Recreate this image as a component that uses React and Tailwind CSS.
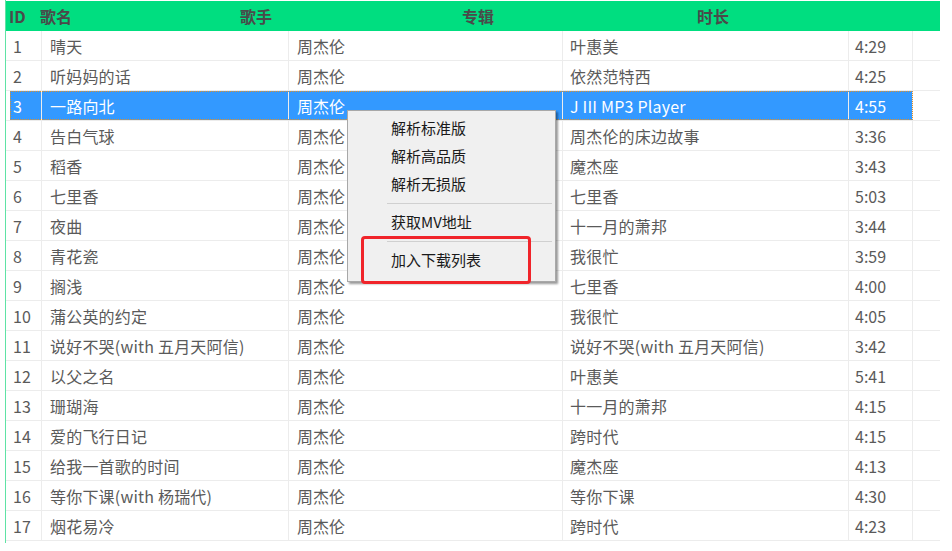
import React from "react";

const rows = [
  ["1", "晴天", "周杰伦", "叶惠美", "4:29"],
  ["2", "听妈妈的话", "周杰伦", "依然范特西", "4:25"],
  ["3", "一路向北", "周杰伦", "J III MP3 Player", "4:55"],
  ["4", "告白气球", "周杰伦", "周杰伦的床边故事", "3:36"],
  ["5", "稻香", "周杰伦", "魔杰座", "3:43"],
  ["6", "七里香", "周杰伦", "七里香", "5:03"],
  ["7", "夜曲", "周杰伦", "十一月的萧邦", "3:44"],
  ["8", "青花瓷", "周杰伦", "我很忙", "3:59"],
  ["9", "搁浅", "周杰伦", "七里香", "4:00"],
  ["10", "蒲公英的约定", "周杰伦", "我很忙", "4:05"],
  ["11", "说好不哭(with 五月天阿信)", "周杰伦", "说好不哭(with 五月天阿信)", "3:42"],
  ["12", "以父之名", "周杰伦", "叶惠美", "5:41"],
  ["13", "珊瑚海", "周杰伦", "十一月的萧邦", "4:15"],
  ["14", "爱的飞行日记", "周杰伦", "跨时代", "4:15"],
  ["15", "给我一首歌的时间", "周杰伦", "魔杰座", "4:13"],
  ["16", "等你下课(with 杨瑞代)", "周杰伦", "等你下课", "4:30"],
  ["17", "烟花易冷", "周杰伦", "跨时代", "4:23"],
];

const font = { fontFamily: '"Noto Sans CJK SC", "Microsoft YaHei", sans-serif' };

function Row({ r, selected }) {
  const txt = selected ? "text-white" : "text-[#5a5a5a]";
  const cell = "h-full flex items-center pt-[1px] border-r border-[#ececec] whitespace-nowrap overflow-hidden";
  return (
    <div className="flex h-[30px] border-b border-[#ececec]">
      <div className="w-[4px]" />
      <div
        className={
          "flex w-[903px] h-full " +
          (selected
            ? "bg-[#3399ff] outline-1 outline-dotted outline-[#e0902a] -outline-offset-1"
            : "")
        }
      >
        <div className={cell + " w-[32px] pl-[3px] " + txt}>{r[0]}</div>
        <div className={cell + " w-[247px] pl-[8px] tracking-[0.2px] " + txt}>{r[1]}</div>
        <div className={cell + " w-[274px] pl-[8px] " + txt}>{r[2]}</div>
        <div className={cell + " w-[286px] pl-[7px] tracking-[0.2px] " + txt}>{r[3]}</div>
        <div className={cell + " w-[64px] pl-[6px] " + txt}>{r[4]}</div>
      </div>
      <div className="flex-1 h-full" />
    </div>
  );
}

export default function App() {
  return (
    <div className="w-[952px] h-[551px] bg-white relative overflow-hidden text-[16px]" style={font}>
      <div className="pl-[5px]">
        <div className="w-[935px] h-[543px] border-l-[1.5px] border-[#5fe3a5] pt-[1px]">
          <div className="h-[30px] bg-[#00de80] flex items-center text-[#4a4a4a] font-semibold whitespace-nowrap">
            <div className="w-[34px] pl-[3px]">ID</div>
            <div className="w-[200px]">歌名</div>
            <div className="w-[222px]">歌手</div>
            <div className="w-[235px]">专辑</div>
            <div className="flex-1">时长</div>
          </div>
          {rows.map((r, i) => (
            <Row key={i} r={r} selected={i === 2} />
          ))}
        </div>
      </div>

      <div className="absolute left-[347px] top-[110px] w-[209px] h-[172px] bg-[#f0f0f0] border border-[#a8a8a8] shadow-[2px_2px_2px_rgba(0,0,0,0.4)] text-[15px] text-[#1a1a1a] pt-[3px]">
        <div className="h-[28px] flex items-center pl-[43px]">解析标准版</div>
        <div className="h-[28px] flex items-center pl-[43px]">解析高品质</div>
        <div className="h-[28px] flex items-center pl-[43px]">解析无损版</div>
        <div className="h-[10px] flex items-center pl-[39px] pr-[3px]">
          <div className="w-full h-px bg-[#d0d0d0]" />
        </div>
        <div className="h-[28px] flex items-center pl-[43px]">获取MV地址</div>
        <div className="h-[10px] flex items-center pl-[39px] pr-[3px]">
          <div className="w-full h-px bg-[#d0d0d0]" />
        </div>
        <div className="h-[28px] flex items-center pl-[43px]">加入下载列表</div>
      </div>

      <div className="absolute left-[361px] top-[236px] w-[170px] h-[48px] border-[3px] border-solid border-[#f0242a] rounded-[4px]" />
    </div>
  );
}
